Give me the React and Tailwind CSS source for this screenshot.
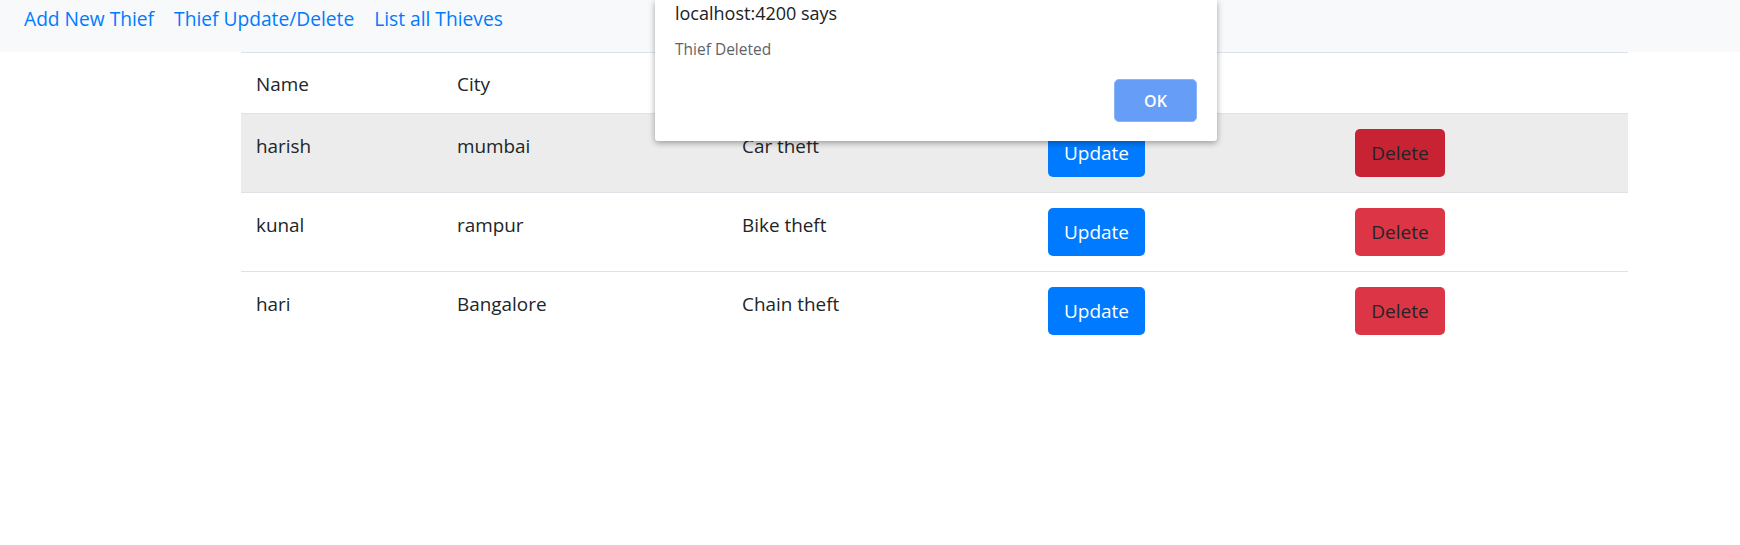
import React from "react";

const thieves = [
  { name: "harish", city: "mumbai", crime: "Car theft" },
  { name: "kunal", city: "rampur", crime: "Bike theft" },
  { name: "hari", city: "Bangalore", crime: "Chain theft" },
];

const App = () => {
  return (
    <div className="relative min-h-[545px] bg-white font-['Segoe_UI','Open_Sans',sans-serif] text-[#212529]">
      <nav className="flex h-[52px] items-start gap-[20px] bg-[#f8f9fa] pl-[24px] pt-[4px] text-[19.2px] leading-[30px] text-[#007bff]">
        <a href="#">Add New Thief</a>
        <a href="#">Thief Update/Delete</a>
        <a href="#">List all Thieves</a>
      </nav>

      <div className="ml-[241px] w-[1387px]">
        <table className="w-full table-fixed border-collapse text-left text-[18.9px] leading-[30px]">
          <thead>
            <tr className="border-t border-[#dee2e6]">
              <th className="w-[201px] px-[15px] pt-[16px] pb-[14px] font-normal">Name</th>
              <th className="w-[285px] px-[15px] pt-[16px] pb-[14px] font-normal">City</th>
              <th className="w-[306px] px-[15px] pt-[16px] pb-[14px] font-normal">Crime</th>
              <th className="w-[307px] px-[15px] pt-[16px] pb-[14px] font-normal"></th>
              <th className="px-[15px] pt-[16px] pb-[14px] font-normal"></th>
            </tr>
          </thead>
          <tbody>
            {thieves.map((t, i) => (
              <tr key={t.name} className={"border-t border-[#dee2e6] " + (i === 0 ? "bg-[#ececec]" : "")}>
                <td className="px-[15px] pt-[17px] pb-[13px] align-top">{t.name}</td>
                <td className="px-[15px] pt-[17px] pb-[13px] align-top">{t.city}</td>
                <td className="px-[15px] pt-[17px] pb-[13px] align-top">{t.crime}</td>
                <td className="p-[15px] align-top">
                  <button className="h-[48px] w-[97px] rounded-[5px] bg-[#007bff] text-[19px] text-white">Update</button>
                </td>
                <td className="p-[15px] align-top">
                  <button className={"h-[48px] w-[90px] rounded-[5px] text-[19px] text-[#212529] " + (i === 0 ? "bg-[#c82333]" : "bg-[#dc3545]")}>
                    Delete
                  </button>
                </td>
              </tr>
            ))}
          </tbody>
        </table>
      </div>

      {/* browser alert */}
      <div className="absolute left-[655px] top-0 flex h-[141px] w-[562px] flex-col rounded-b-[3px] bg-white px-[20px] shadow-[0_2px_6px_rgba(0,0,0,0.35)]">
        <div className="pt-[1px] text-[18px] leading-[24px] text-[#202124]">localhost:4200 says</div>
        <div className="mt-[14px] text-[15.5px] leading-[20px] text-[#5f6368]">Thief Deleted</div>
        <div className="mt-auto mb-[19px] flex justify-end">
          <button className="h-[43px] w-[83px] rounded-[5px] border border-[#8ab4f8] bg-[#669df6] text-[16px] font-semibold text-white">OK</button>
        </div>
      </div>
    </div>
  );
};

export default App;
